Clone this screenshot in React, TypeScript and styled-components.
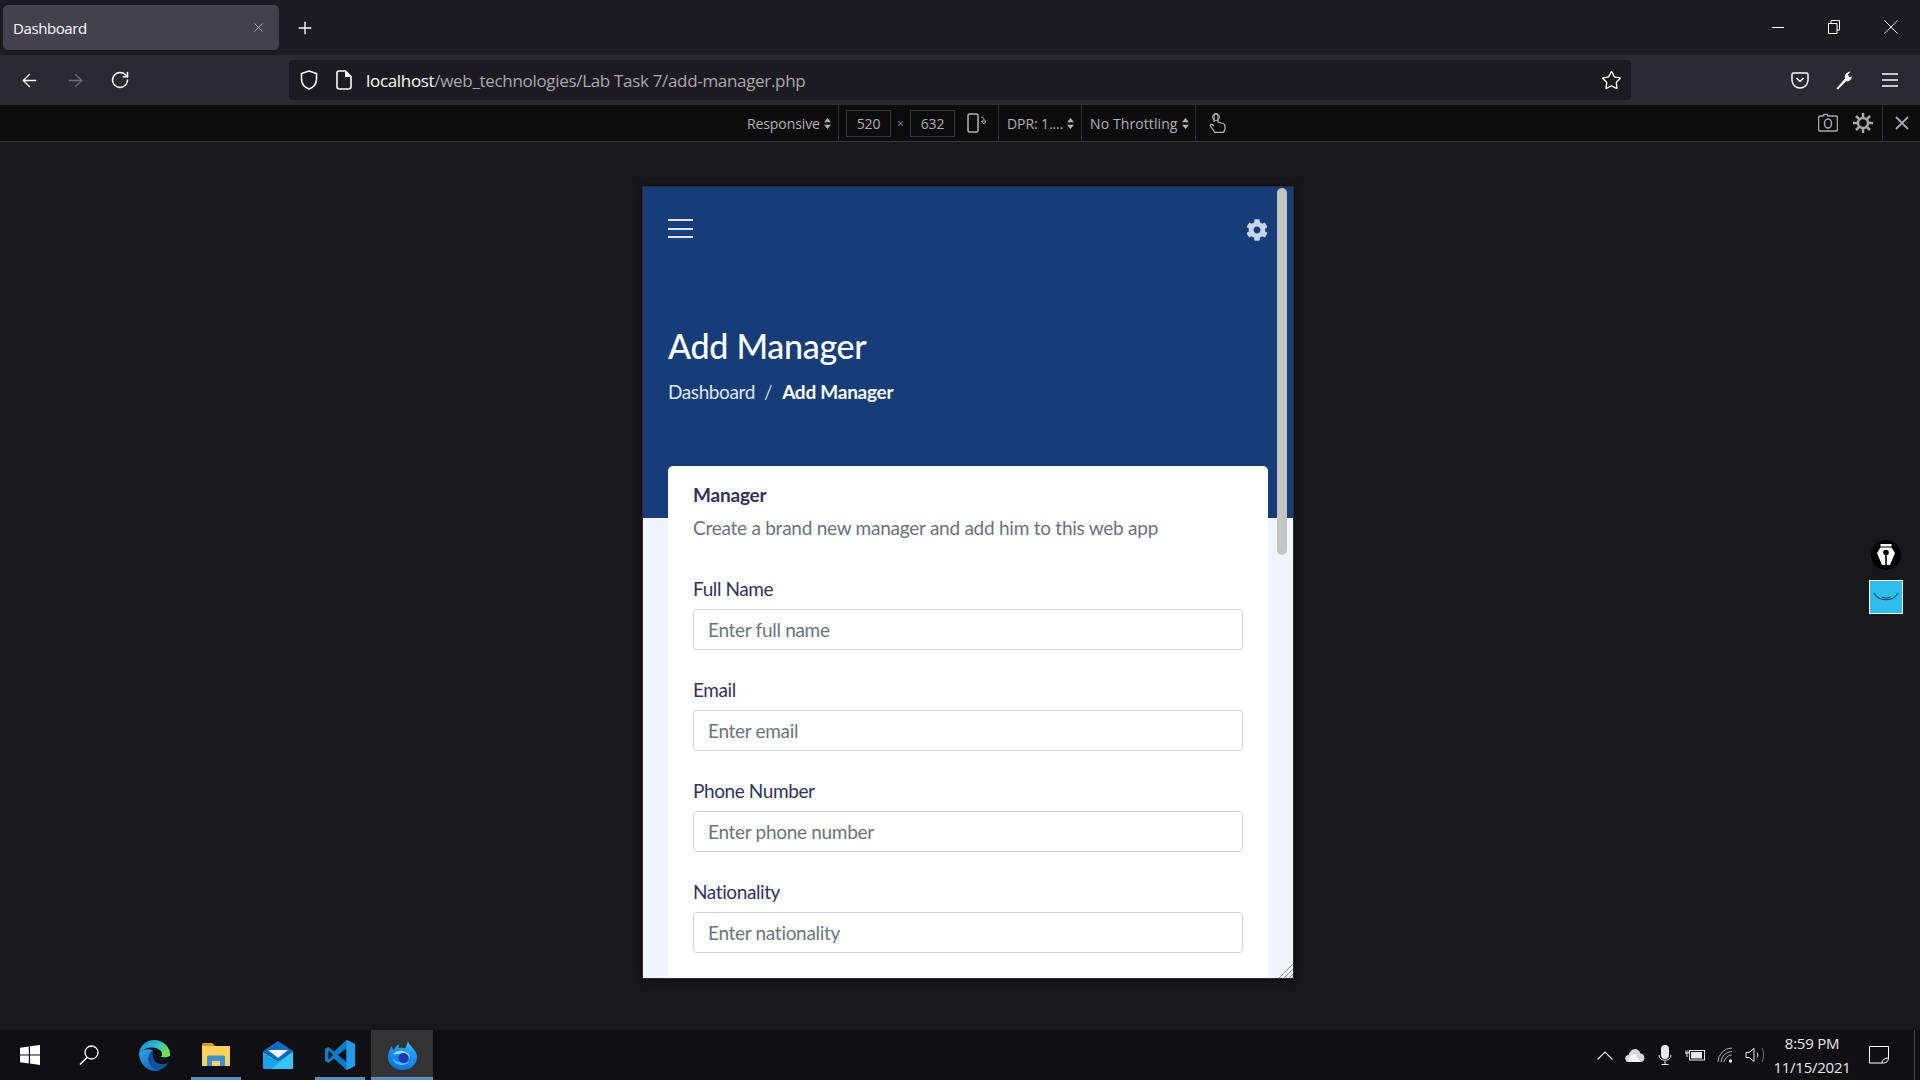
import React from 'react';
import styled, { createGlobalStyle } from 'styled-components';
import { FaCog } from 'react-icons/fa';
import { ArrowLeft, ArrowRight, Plus, RotateCw, Star, X } from 'lucide-react';

const chromeFont = '"Open Sans", "Noto Sans", sans-serif';
const pageFont = 'Lato, "Noto Sans", sans-serif';

const GlobalStyle = createGlobalStyle`
  html, body { margin: 0; padding: 0; background: #18181a; overflow: hidden; }
  * { box-sizing: border-box; }
`;

const Screen = styled.div`
  position: relative;
  width: 1920px;
  height: 1080px;
  display: flex;
  flex-direction: column;
  overflow: hidden;
  font-family: ${chromeFont};
`;

const Glyph = styled.svg<{ $ml?: number; $mr?: number }>`
  flex: none;
  margin-left: ${(p) => p.$ml ?? 0}px;
  margin-right: ${(p) => p.$mr ?? 0}px;
`;

/* browser chrome */
const TitleBar = styled.div`
  height: 55px;
  flex: none;
  background: #1c1b22;
  display: flex;
  align-items: center;
  padding-left: 3px;
  color: #fbfbfe;
`;

const Tab = styled.div`
  width: 276px;
  height: 45px;
  background: #42414d;
  border-radius: 5px;
  display: flex;
  align-items: center;
  justify-content: space-between;
  padding: 0 13px 0 10px;
  font-size: 15px;
  letter-spacing: -0.4px;
`;

const NewTab = styled.div`
  margin-left: 16px;
  display: flex;
`;

const WindowControls = styled.div`
  margin-left: auto;
  display: flex;
  align-items: center;
  padding: 0 22px 2px 0;
  gap: 44px;
`;

const NavBar = styled.div`
  height: 50px;
  flex: none;
  background: #2b2a33;
  display: flex;
  align-items: center;
  padding-left: 19px;
  color: #fbfbfe;
`;

const NavButtons = styled.div`
  display: flex;
  align-items: center;
  gap: 24.5px;
  width: 270px;
`;

const UrlBar = styled.div`
  width: 1342px;
  height: 40px;
  background: #1c1b22;
  border-radius: 4px;
  display: flex;
  align-items: center;
  padding: 0 8px 0 11px;
`;

const UrlText = styled.div`
  margin-left: 14px;
  padding-top: 1px;
  font-size: 17px;
  letter-spacing: -0.32px;
  color: #a8a8ad;
  white-space: nowrap;
  b { font-weight: 400; color: #fbfbfe; }
`;

const UrlStar = styled.div`
  margin-left: auto;
  margin-right: 1px;
  display: flex;
`;

const NavTools = styled.div`
  margin-left: auto;
  display: flex;
  align-items: center;
  gap: 26px;
  padding-right: 22px;
`;

const DevBar = styled.div`
  height: 37px;
  flex: none;
  background: #0c0c0d;
  border-bottom: 1px solid #38383d;
  display: flex;
  align-items: stretch;
  padding-left: 747px;
  font-size: 14px;
  letter-spacing: -0.1px;
  color: #b1b1b3;
`;

const DevGroup = styled.div<{ $w: number; $pl?: number; $ls?: number; $line?: boolean }>`
  width: ${(p) => p.$w}px;
  flex: none;
  display: flex;
  align-items: center;
  padding-left: ${(p) => p.$pl ?? 0}px;
  letter-spacing: ${(p) => p.$ls ?? -0.1}px;
  white-space: nowrap;
  border-right: ${(p) => (p.$line ? '1px solid #2f2f33' : 'none')};
`;

const DevInput = styled.div<{ $ml?: number }>`
  width: 45px;
  height: 27px;
  margin-left: ${(p) => p.$ml ?? 0}px;
  border: 1px solid #38383d;
  display: flex;
  align-items: center;
  justify-content: center;
`;

const Times = styled.span`
  width: 19px;
  text-align: center;
  color: #8a8a8d;
  font-size: 12px;
`;

const DevRight = styled.div`
  margin-left: auto;
  display: flex;
  align-items: center;
`;

const DevClose = styled.div`
  width: 38px;
  align-self: stretch;
  border-left: 1px solid #2f2f33;
  display: flex;
  align-items: center;
  justify-content: center;
`;

/* area around the responsive frame */
const Stage = styled.div`
  flex: 1;
  min-height: 0;
  background: #18181a;
  display: flex;
  justify-content: center;
  align-items: flex-start;
  padding: 45px 0 0 16px;
`;

const Device = styled.div`
  position: relative;
  width: 650px;
  height: 791px;
  overflow: hidden;
  background: #f1f5fb;
  outline: 1px solid #2c2c30;
  box-shadow: 0 0 6px #000;
  font-family: ${pageFont};
`;

const Hero = styled.header`
  height: 331px;
  background: #163d78;
  padding: 32px 25px 0;
  color: #fff;
`;

const TopRow = styled.div`
  display: flex;
  justify-content: space-between;
  align-items: flex-start;
  color: #c8d4e8;
`;

const Burger = styled.div`
  width: 25px;
  display: flex;
  flex-direction: column;
  gap: 6.5px;
  span {
    display: block;
    height: 2px;
    background: #dbe3ef;
  }
`;

const Title = styled.h1`
  margin: 83px 0 0;
  font-size: 34px;
  line-height: 44px;
  font-weight: 500;
  letter-spacing: -0.3px;
`;

const Crumbs = styled.div`
  margin-top: 12px;
  display: flex;
  font-size: 19px;
  line-height: 24px;
  letter-spacing: -0.4px;
  color: #dfe6f1;
  i { font-style: normal; margin: 0 10px 0 9px; color: #c8d4e8; }
  b { font-weight: 700; color: #fff; letter-spacing: -0.25px; }
`;

const Body = styled.main`
  padding: 0 25px;
`;

const Card = styled.section`
  margin-top: -52px;
  background: #fff;
  border-radius: 5px 5px 0 0;
  padding: 18px 25px 25px;
`;

const CardTitle = styled.h2`
  margin: 0;
  font-size: 19px;
  line-height: 22px;
  font-weight: 700;
  letter-spacing: -0.2px;
  color: #32325d;
`;

const CardText = styled.p`
  margin: 10px 0 35px;
  font-size: 19px;
  line-height: 24px;
  letter-spacing: -0.25px;
  color: #6b7280;
`;

const Field = styled.div`
  margin-bottom: 26px;
`;

const Label = styled.label`
  display: block;
  margin-bottom: 7px;
  font-size: 19px;
  line-height: 27px;
  letter-spacing: -0.4px;
  color: #32325d;
`;

const TextInput = styled.input`
  display: block;
  width: 100%;
  height: 41px;
  border: 1px solid #ced4da;
  border-radius: 4px;
  padding: 0 14px;
  font-family: ${pageFont};
  font-size: 19px;
  letter-spacing: -0.3px;
  background: #fff;
  &::placeholder { color: #6c757d; opacity: 1; }
`;

const Scrollbar = styled.div`
  position: absolute;
  top: 1px;
  right: 6px;
  width: 10px;
  height: 367px;
  border-radius: 5px;
  background: #c4c4c4;
`;

const Resizer = styled.svg`
  position: absolute;
  right: 0;
  bottom: 0;
`;

const Floating = styled.div`
  position: absolute;
  left: 1869px;
  top: 540px;
  display: flex;
  flex-direction: column;
  align-items: center;
  gap: 10px;
  width: 34px;
`;

const SmileTile = styled.div`
  width: 34px;
  height: 34px;
  border: 1px solid #fff;
  background: #2fbdee;
  display: flex;
  align-items: center;
  justify-content: center;
`;

/* windows taskbar */
const Taskbar = styled.footer`
  height: 50px;
  flex: none;
  background: #101012;
  display: flex;
  align-items: stretch;
  color: #fff;
`;

const TaskSlot = styled.div<{ $w: number; $pr?: number; $open?: boolean; $active?: boolean }>`
  position: relative;
  width: ${(p) => p.$w}px;
  padding-right: ${(p) => p.$pr ?? 0}px;
  flex: none;
  display: flex;
  align-items: center;
  justify-content: center;
  background: ${(p) => (p.$active ? '#333333' : 'transparent')};
  &::after {
    content: '';
    display: ${(p) => (p.$open ? 'block' : 'none')};
    position: absolute;
    left: ${(p) => (p.$active ? 0 : 6)}px;
    right: ${(p) => (p.$active ? 0 : 6)}px;
    bottom: 0;
    height: 3px;
    background: #5a8fbd;
  }
`;

const Tray = styled.div`
  margin-left: auto;
  display: flex;
  align-items: center;
`;

const TrayIcon = styled.div<{ $w: number }>`
  width: ${(p) => p.$w}px;
  display: flex;
  justify-content: center;
`;

const Clock = styled.div`
  width: 90px;
  text-align: center;
  font-size: 15px;
  line-height: 24px;
  letter-spacing: -0.25px;
  color: #e8e8e8;
`;

const Notify = styled.div`
  width: 57px;
  padding-left: 12px;
  display: flex;
`;

const ShowDesktop = styled.div`
  width: 1px;
  margin-right: 5px;
  align-self: stretch;
  background: #444;
`;

const Stepper = () => (
  <Glyph width="7" height="13" viewBox="0 0 7 13" $ml={4}>
    <path d="M3.5 1 7 5.3H0zM3.5 12 0 7.7h7z" fill="#b1b1b3" />
  </Glyph>
);

const EdgeIcon = () => (
  <svg width="31" height="31" viewBox="0 0 31 31">
    <defs>
      <linearGradient id="edgeA" x1="0.95" y1="0.55" x2="0.15" y2="0.05">
        <stop offset="0" stopColor="#6fe05a" />
        <stop offset="0.5" stopColor="#2bbccb" />
        <stop offset="1" stopColor="#1a8ad8" />
      </linearGradient>
      <linearGradient id="edgeB" x1="0" y1="0" x2="0.6" y2="1">
        <stop offset="0" stopColor="#2ba6ee" />
        <stop offset="1" stopColor="#1267bd" />
      </linearGradient>
    </defs>
    <path d="M15 0C7 0 1 6 0 13c4-4 9-6 14-5.500 5 .5 9 3 9 6.500 0 1-.5 2-1.500 2.500 2 1 6 1.500 9.500-.5.300-1 0-2.500 0-3C30 5.500 23 0 15 0z" fill="url(#edgeA)" />
    <path d="M0 13c0 9.500 7 18 15.500 18 2.500 0 4.500-.5 6.500-1.500-5 .5-10.500-2.500-12-8-1-4 .5-9 4-11.500C8 8.500 3 9.500 0 13z" fill="url(#edgeB)" />
    <path d="M14 10c-3.500 2.500-5 7.500-4 11.500 1.500 5.500 7 8.500 12 8 3-1.300 5.500-3.500 7.500-6.500-4 1.500-9 1.500-12-.5-3-2-4.500-6.500-3.500-12.500z" fill="#0e4f9e" />
    <path d="M15 15c0 3.500 1.500 6 4.500 7.500 3.500 1.500 7.500 1 10-.5.800-1.500 1.200-3.500 1.300-6-3 2-7.500 2-9.800 1 1-.5 1.500-1.500 1.500-2.500C22 12 16 11.500 15 15z" fill="#101012" />
  </svg>
);

const FolderIcon = () => (
  <svg width="28" height="24" viewBox="0 0 28 24">
    <path d="M0 1.500A1.500 1.500 0 0 1 1.500 0h9l3 3.500H0z" fill="#d99b0c" />
    <path d="M0 3h28v19a1 1 0 0 1-1 1H1a1 1 0 0 1-1-1z" fill="#fbd25d" />
    <path d="M5 23v-9a1.500 1.500 0 0 1 1.500-1.500h15A1.500 1.500 0 0 1 23 14v9h-5v-5h-8v5z" fill="#3f8fd1" />
    <path d="M10 18h8v2h-8z" fill="#fbd25d" />
  </svg>
);

const MailIcon = () => (
  <svg width="30" height="28" viewBox="0 0 30 28">
    <path d="M0 10 15 0l15 10-15 10z" fill="#0d6cbf" />
    <path d="M5 9h20l-10 8z" fill="#f4f4f4" />
    <path d="M0 10.500 15 20l15-9.500V27a1 1 0 0 1-1 1H1a1 1 0 0 1-1-1z" fill="#1aa3e8" />
    <path d="M30 10.500V27a1 1 0 0 1-1 1H8z" fill="#35c4f5" />
  </svg>
);

const CodeIcon = () => (
  <svg width="30" height="30" viewBox="0 0 30 30">
    <path d="M21.500 0 30 4v22l-8.500 4L9 18.500 3.500 23 0 21V9l3.500-2L9 11.500z" fill="#0a7cc7" />
    <path d="M3.500 10.500v9L8 15zM21.500 8 13 15l8.500 7z" fill="#101012" />
    <path d="M21.500 0 30 4v22l-8.500 4z" fill="#1f9cf0" />
  </svg>
);

const FirefoxIcon = () => (
  <svg width="29" height="29" viewBox="0 0 29 29">
    <defs>
      <linearGradient id="foxA" x1="0.3" y1="1" x2="0.7" y2="0">
        <stop offset="0" stopColor="#0f6fe0" />
        <stop offset="0.7" stopColor="#1f9cf2" />
        <stop offset="1" stopColor="#4cc8fa" />
      </linearGradient>
    </defs>
    <path d="M20 0c.5 3 2.500 4 4.500 7C27.500 10 29 13 29 16a14.500 13 0 0 1-29 0C0 11 2 7.500 4 5c0 2 .7 3.500 2 4 .5-2.500 3-5 5.500-5.500-1 1.500-1 3-.5 3.500 2-.5 4.500-.5 6 .5C18 6 19.500 3 20 0z" fill="url(#foxA)" />
    <path d="M5 13c3-3 8-4 12-2.500 3.500 1.500 5.500 4.500 5 8-1-3-3-5.500-6-6-3.500-.6-7 1.500-11 .5z" fill="#8adafc" />
    <circle cx="15.500" cy="17" r="5" fill="#2434b0" />
    <path d="M4 17c1.500 5 6 7.500 11 7 3-.3 5.500-1.800 6.500-3.500-2 1.200-5 2-8 1.200-4-1-7-2.700-9.500-4.700z" fill="#46b4f8" />
  </svg>
);

const fields = [
  ['Full Name', 'Enter full name'],
  ['Email', 'Enter email'],
  ['Phone Number', 'Enter phone number'],
  ['Nationality', 'Enter nationality'],
];

export default function App() {
  return (
    <Screen>
      <GlobalStyle />
      <TitleBar>
        <Tab>
          Dashboard
          <X size={15} strokeWidth={1.2} color="#c8c8cc" />
        </Tab>
        <NewTab>
          <Plus size={20} strokeWidth={1.6} />
        </NewTab>
        <WindowControls>
          <svg width="12" height="12" viewBox="0 0 12 12">
            <path d="M0 6.500h12" stroke="#fff" />
          </svg>
          <svg width="12" height="14" viewBox="0 0 12 14">
            <path d="M3 3V.5h8.500v9.500H9M.5 3.500H9V13.500H.5z" fill="none" stroke="#fff" />
          </svg>
          <svg width="14" height="14" viewBox="0 0 14 14">
            <path d="M.5.500l13 13M13.500.500l-13 13" stroke="#fff" />
          </svg>
        </WindowControls>
      </TitleBar>

      <NavBar>
        <NavButtons>
          <ArrowLeft size={21} strokeWidth={1.6} />
          <ArrowRight size={21} strokeWidth={1.6} color="#6e6d75" />
          <RotateCw size={20} strokeWidth={1.8} />
        </NavButtons>
        <UrlBar>
          <svg width="18" height="20" viewBox="0 0 18 20">
            <path d="M9 1 1.500 3.500V9c0 5 3.500 8.500 7.500 10 4-1.500 7.500-5 7.500-10V3.500z" fill="none" stroke="#fbfbfe" strokeWidth="1.6" />
          </svg>
          <Glyph width="16" height="20" viewBox="0 0 16 20" $ml={18}>
            <path d="M3 1h6.500L15 6.500V16.500A2.500 2.500 0 0 1 12.500 19h-9A2.500 2.500 0 0 1 1 16.500V3A2 2 0 0 1 3 1z" fill="none" stroke="#fbfbfe" strokeWidth="1.6" />
            <path d="M9 1v6h6z" fill="#fbfbfe" />
          </Glyph>
          <UrlText>
            <b>localhost</b>/web_technologies/Lab Task 7/add-manager.php
          </UrlText>
          <UrlStar>
            <Star size={21} strokeWidth={1.5} />
          </UrlStar>
        </UrlBar>
        <NavTools>
          <svg width="18" height="17" viewBox="0 0 18 17">
            <path d="M2.500 1h13A1.500 1.500 0 0 1 17 2.500V8A8 8 0 0 1 1 8V2.500A1.500 1.500 0 0 1 2.500 1z" fill="none" stroke="#fbfbfe" strokeWidth="1.5" />
            <path d="m5.500 6 3.500 3.500L12.500 6" fill="none" stroke="#fbfbfe" strokeWidth="1.5" />
          </svg>
          <svg width="18" height="20" viewBox="0 0 18 20">
            <path d="M1.500 18.500 10 8.500c-1-3 1-6.500 5.500-7L13 4.500l1 2.500 3-.5c-.5 3.500-3 5.500-6 4.800L3 19.500z" fill="#fbfbfe" />
          </svg>
          <Glyph width="16" height="14" viewBox="0 0 16 14" $ml={3}>
            <path d="M0 1h16M0 7h16M0 13h16" stroke="#fbfbfe" strokeWidth="1.5" />
          </Glyph>
        </NavTools>
      </NavBar>

      <DevBar>
        <DevGroup $w={92} $line>
          Responsive
          <Stepper />
        </DevGroup>
        <DevGroup $w={160} $line>
          <DevInput $ml={7}>520</DevInput>
          <Times>×</Times>
          <DevInput>632</DevInput>
          <Glyph width="19" height="20" viewBox="0 0 19 20" $ml={12}>
            <rect x="1" y="1" width="10" height="18" rx="1.500" fill="none" stroke="#b1b1b3" strokeWidth="1.500" />
            <path d="M14 4c2 0 3 1 3 3M14.500 8h4.500L17 11z" fill="none" stroke="#b1b1b3" />
          </Glyph>
        </DevGroup>
        <DevGroup $w={83} $pl={8} $line>
          DPR: 1....
          <Stepper />
        </DevGroup>
        <DevGroup $w={114} $pl={8} $ls={0.1} $line>
          No Throttling
          <Stepper />
        </DevGroup>
        <DevGroup $w={40} $pl={13}>
          <svg width="17" height="20" viewBox="0 0 17 20">
            <path d="M5 9V3a2 2 0 0 1 4 0v6l5 1.500c1.500.5 2 1.500 2 3V16l-1.500 3.500H6L1.500 13c-.7-1 .8-2.500 2-1.500L5 13" fill="none" stroke="#b1b1b3" strokeWidth="1.300" />
            <circle cx="7" cy="4" r="3.500" fill="none" stroke="#b1b1b3" />
          </svg>
        </DevGroup>
        <DevRight>
          <Glyph width="20" height="20" viewBox="0 0 20 20" $mr={15}>
            <path d="M2 3h3l1-1.500h3L10 3h8a1.500 1.500 0 0 1 1.500 1.500v12A1.500 1.500 0 0 1 18 18H2A1.500 1.500 0 0 1 .5 16.500v-12A1.500 1.500 0 0 1 2 3z" fill="none" stroke="#a8a8ab" strokeWidth="1.500" />
            <ellipse cx="10" cy="10.500" rx="3.500" ry="4.500" fill="none" stroke="#a8a8ab" strokeWidth="1.500" />
          </Glyph>
          <Glyph width="20" height="20" viewBox="0 0 20 20" $mr={9}>
            <circle cx="10" cy="10" r="5" fill="none" stroke="#a8a8ab" strokeWidth="2.500" />
            <path d="M10 0v4M10 16v4M0 10h4M16 10h4M3 3l3 3M14 14l3 3M17 3l-3 3M6 14l-3 3" stroke="#a8a8ab" strokeWidth="2.500" />
          </Glyph>
          <DevClose>
            <svg width="14" height="14" viewBox="0 0 14 14">
              <path d="m1 1 12 12M13 1 1 13" stroke="#a8a8ab" strokeWidth="1.800" />
            </svg>
          </DevClose>
        </DevRight>
      </DevBar>

      <Stage>
        <Device>
          <Hero>
            <TopRow>
              <Burger>
                <span />
                <span />
                <span />
              </Burger>
              <FaCog size={22} />
            </TopRow>
            <Title>Add Manager</Title>
            <Crumbs>
              Dashboard
              <i>/</i>
              <b>Add Manager</b>
            </Crumbs>
          </Hero>
          <Body>
            <Card>
              <CardTitle>Manager</CardTitle>
              <CardText>Create a brand new manager and add him to this web app</CardText>
              {fields.map(([label, hint]) => (
                <Field key={label}>
                  <Label>{label}</Label>
                  <TextInput placeholder={hint} readOnly />
                </Field>
              ))}
            </Card>
          </Body>
          <Scrollbar />
          <Resizer width="16" height="16" viewBox="0 0 16 16">
            <path d="M2 16 16 2M7 16l9-9M12 16l4-4" stroke="#8f8f94" />
          </Resizer>
        </Device>
      </Stage>

      <Taskbar>
        <TaskSlot $w={60}>
          <svg width="20" height="20" viewBox="0 0 20 20">
            <path d="M0 2.800 8.800 1.500v8H0zM10 1.300 20 0v9.500H10zM0 10.500h8.800v8L0 17.200zM10 10.500h10V20l-10-1.400z" fill="#fff" />
          </svg>
        </TaskSlot>
        <TaskSlot $w={63} $pr={5}>
          <svg width="20" height="20" viewBox="0 0 20 20">
            <circle cx="12.500" cy="7.500" r="6.500" fill="none" stroke="#fff" strokeWidth="1.300" />
            <path d="M8 12.500 1 19.500" stroke="#fff" strokeWidth="1.500" />
          </svg>
        </TaskSlot>
        <TaskSlot $w={62}>
          <EdgeIcon />
        </TaskSlot>
        <TaskSlot $w={62} $open>
          <FolderIcon />
        </TaskSlot>
        <TaskSlot $w={62}>
          <MailIcon />
        </TaskSlot>
        <TaskSlot $w={62} $open>
          <CodeIcon />
        </TaskSlot>
        <TaskSlot $w={62} $open $active>
          <FirefoxIcon />
        </TaskSlot>
        <Tray>
          <TrayIcon $w={35}>
            <svg width="16" height="9" viewBox="0 0 16 9">
              <path d="m.5 8.500 7.500-7.500 7.500 7.500" fill="none" stroke="#e8e8e8" strokeWidth="1.200" />
            </svg>
          </TrayIcon>
          <TrayIcon $w={26}>
            <svg width="20" height="13" viewBox="0 0 20 13">
              <path d="M4 13a3.500 3.500 0 0 1-.5-7C4.500 3 7 0 10 0c2.500 0 4.500 1.500 5.500 4.500A4.300 4.300 0 0 1 16 13z" fill="#d8d8d8" />
              <path d="M6 6c1.500-1 3-1 4.500 0L16 13H3z" fill="#f4f4f4" />
            </svg>
          </TrayIcon>
          <TrayIcon $w={33}>
            <svg width="14" height="20" viewBox="0 0 14 20">
              <rect x="3" y="0" width="8" height="14" rx="4" fill="#e8e8e8" />
              <path d="M1 10c0 7 12 7 12 0M7 16v3M3.500 19.500h7" fill="none" stroke="#e8e8e8" />
            </svg>
          </TrayIcon>
          <TrayIcon $w={27}>
            <svg width="20" height="12" viewBox="0 0 20 12">
              <rect x="4.500" y="1.500" width="15" height="9.500" fill="none" stroke="#e8e8e8" />
              <rect x="6" y="3" width="11" height="6.500" fill="#e8e8e8" />
              <path d="M0 4h4M1 1.500v2.500M3 1.500v2.500M2 4v4" stroke="#e8e8e8" />
            </svg>
          </TrayIcon>
          <TrayIcon $w={35}>
            <svg width="17" height="16" viewBox="0 0 17 16">
              <path d="M1 15a14 14 0 0 1 14-14M4 15A11 11 0 0 1 15 4.500M7 15a8 8 0 0 1 8-7" fill="none" stroke="#aaa" />
              <circle cx="13.500" cy="14" r="1.700" fill="#e8e8e8" />
            </svg>
          </TrayIcon>
          <TrayIcon $w={24}>
            <svg width="20" height="16" viewBox="0 0 20 16">
              <path d="M1 5.500h3L9 1.500v13L4 10.500H1z" fill="none" stroke="#e8e8e8" />
              <path d="M12 5.500c1 1.500 1 3.500 0 5" fill="none" stroke="#e8e8e8" />
              <path d="M17 1c2 4 2 10 0 14" fill="none" stroke="#777" />
            </svg>
          </TrayIcon>
          <Clock>
            8:59 PM
            <br />
            11/15/2021
          </Clock>
          <Notify>
            <svg width="20" height="18" viewBox="0 0 20 18">
              <path d="M.5.500h19V12c0 3-2 5-5 5H.5z" fill="none" stroke="#fff" />
              <path d="M13 17c0-3 3-5 6.500-5" fill="none" stroke="#fff" />
            </svg>
          </Notify>
          <ShowDesktop />
        </Tray>
      </Taskbar>

      <Floating>
        <svg width="30" height="30" viewBox="0 0 30 30">
          <circle cx="15" cy="15" r="15" fill="#000" />
          <path d="M9.500 4h11v2.500h-11z" fill="#fff" />
          <path d="M9.500 7.500h11L24 13l-5 12h-8L6 13z" fill="#fff" />
          <circle cx="15" cy="12.500" r="2.800" fill="#000" />
          <path d="M14.200 14h1.600v11h-1.600z" fill="#000" />
        </svg>
        <SmileTile>
          <svg width="26" height="10" viewBox="0 0 26 10">
            <path d="M1 1c5 9 19 9 24 0M9 5c3 1.500 5 1.500 8 0" fill="none" stroke="#174a66" strokeWidth="1.200" />
          </svg>
        </SmileTile>
      </Floating>
    </Screen>
  );
}
